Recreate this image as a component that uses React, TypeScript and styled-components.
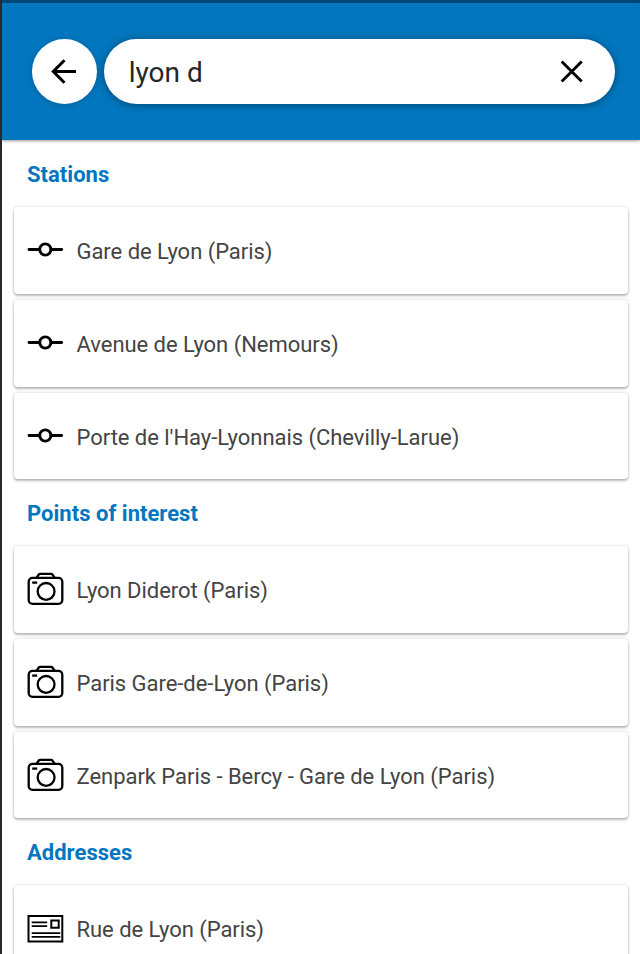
import React from 'react';
import styled, { createGlobalStyle } from 'styled-components';

const GlobalStyle = createGlobalStyle`
  * { box-sizing: border-box; }
  html, body { margin: 0; background: #fff; overflow: hidden; }
  body { font-family: Roboto, "Liberation Sans", sans-serif; }
`;

const Screen = styled.div`
  width: 640px;
  height: 954px;
  overflow: hidden;
  background: #fff;
  border-left: 2px solid #29292b;
`;

const StatusBar = styled.div`
  height: 3px;
  background: #00487a;
`;

const Header = styled.header`
  height: 137px;
  padding: 36px 25px 0 29.5px;
  display: flex;
  align-items: flex-start;
  gap: 7.5px;
  background: #0277bf;
  box-shadow: 0 1px 3px rgba(0, 0, 0, 0.4);
`;

const BackButton = styled.button`
  flex: none;
  width: 65px;
  height: 65px;
  padding: 0;
  border: 0;
  border-radius: 50%;
  background: #fff;
  box-shadow: 0 1px 6px rgba(0, 0, 0, 0.2);
  svg { display: block; }
`;

const SearchField = styled.div`
  flex: 1;
  height: 65px;
  padding: 0 27px 0 24.7px;
  display: flex;
  align-items: center;
  justify-content: space-between;
  border-radius: 33px;
  background: #fff;
  box-shadow: 0 1px 8px rgba(0, 0, 0, 0.42);
`;

const Query = styled.span`
  font-size: 28px;
  line-height: 32px;
  color: #262626;
  padding-top: 2px;
`;

const ClearButton = styled.button`
  width: 32px;
  height: 32px;
  padding: 0;
  border: 0;
  background: none;
  svg { display: block; }
`;

const SectionTitle = styled.h2`
  margin: 0;
  height: 66.8px;
  padding: 1px 0 0 25px;
  font-size: 22px;
  font-weight: 700;
  line-height: 67px;
  letter-spacing: 0.02px;
  color: #0277bf;
`;

const CardList = styled.ul`
  list-style: none;
  margin: 0 0 -0.5px;
  padding: 0 12px;
  display: flex;
  flex-direction: column;
  gap: 6px;
`;

const Card = styled.li`
  height: 86.9px;
  padding-left: 12.5px;
  display: flex;
  align-items: center;
  gap: 13px;
  border-radius: 4px;
  background: #fff;
  box-shadow: 0 0 3px rgba(0, 0, 0, 0.18), 0 2px 2.5px rgba(0, 0, 0, 0.25);
  svg { flex: none; display: block; }
`;

const Label = styled.span`
  font-size: 22px;
  line-height: 28px;
  padding-top: 3.2px;
  letter-spacing: -0.04px;
  color: #444;
  white-space: nowrap;
`;

type Kind = 'station' | 'poi' | 'address';

const BackIcon = () => (
  <svg width="65" height="65" viewBox="0 0 65 65" fill="none" stroke="#000" strokeWidth="3">
    <path d="M44 32.5H21.3M32.5 21.3L21.3 32.5l11.2 11.2" />
  </svg>
);

const ClearIcon = () => (
  <svg width="32" height="32" viewBox="0 0 32 32" fill="none" stroke="#000" strokeWidth="2.9">
    <path d="M5.7 5.5l20 20M25.7 5.5l-20 20" />
  </svg>
);

const KindIcon = ({ kind }: { kind: Kind }) => {
  if (kind === 'station') {
    return (
      <svg width="37" height="36" viewBox="0 0 37 36" fill="none" stroke="#000" strokeWidth="2.9" strokeLinecap="round">
        <circle cx="18.3" cy="17.5" r="5.6" />
        <path d="M2 17.5H12.5M24.1 17.5H34.7" />
      </svg>
    );
  }
  if (kind === 'poi') {
    return (
      <svg width="37" height="36" viewBox="0 0 37 36" fill="none" stroke="#000" strokeWidth="2.3">
        <rect x="1.7" y="6.9" width="33.6" height="26" rx="3.8" />
        <path d="M9.6 6.6L11.8 3.5Q12.3 2.8 13.2 2.8H24Q24.9 2.8 25.4 3.5L27.6 6.6" strokeLinejoin="round" />
        <circle cx="19.1" cy="20.4" r="8.4" />
        <path d="M5.2 11.6H10.2" />
      </svg>
    );
  }
  return (
    <svg width="37" height="36" viewBox="0 0 37 36" fill="none" stroke="#000" strokeWidth="2">
      <path d="M1.5 6H35.3V31.4H1.5Z" />
      <path d="M24.3 10.5H31.7V17.7H24.3Z" />
      <path d="M4.7 12.4H20.2M4.7 16.1H20.2M4.7 23.2H33.3M4.7 26.9H33.3" strokeWidth="1.8" />
    </svg>
  );
};

const sections: { title: string; kind: Kind; items: string[] }[] = [
  {
    title: 'Stations',
    kind: 'station',
    items: ['Gare de Lyon (Paris)', 'Avenue de Lyon (Nemours)', "Porte de l'Hay-Lyonnais (Chevilly-Larue)"],
  },
  {
    title: 'Points of interest',
    kind: 'poi',
    items: ['Lyon Diderot (Paris)', 'Paris Gare-de-Lyon (Paris)', 'Zenpark Paris - Bercy - Gare de Lyon (Paris)'],
  },
  { title: 'Addresses', kind: 'address', items: ['Rue de Lyon (Paris)'] },
];

export default function App() {
  return (
    <>
      <GlobalStyle />
      <Screen>
        <StatusBar />
        <Header>
          <BackButton aria-label="Back"><BackIcon /></BackButton>
          <SearchField>
            <Query>lyon d</Query>
            <ClearButton aria-label="Clear"><ClearIcon /></ClearButton>
          </SearchField>
        </Header>
        {sections.map(({ title, kind, items }) => (
          <section key={title}>
            <SectionTitle>{title}</SectionTitle>
            <CardList>
              {items.map((item) => (
                <Card key={item}>
                  <KindIcon kind={kind} />
                  <Label>{item}</Label>
                </Card>
              ))}
            </CardList>
          </section>
        ))}
      </Screen>
    </>
  );
}
